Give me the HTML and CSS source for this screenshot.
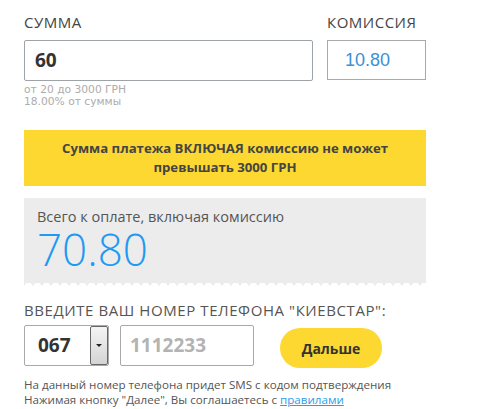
FILE: index.html
```html
<!DOCTYPE html>
<html lang="ru">
<head>
<meta charset="utf-8">
<link rel="stylesheet" href="styles.css">
</head>
<body>
<div class="page">
  <div class="amount-row">
    <div class="col-sum">
      <div class="label">СУММА</div>
      <div class="sum-input">60</div>
      <div class="hint">от 20 до 3000 ГРН</div>
      <div class="hint">18.00% от суммы</div>
    </div>
    <div class="col-fee">
      <div class="label">КОМИССИЯ</div>
      <div class="fee-input">10.80</div>
    </div>
  </div>

  <div class="warning">Сумма платежа ВКЛЮЧАЯ комиссию не может<br>превышать 3000 ГРН</div>

  <div class="total">
    <div class="total-label">Всего к оплате, включая комиссию</div>
    <div class="total-value">70.80</div>
  </div>

  <div class="phone-label">ВВЕДИТЕ ВАШ НОМЕР ТЕЛЕФОНА "КИЕВСТАР":</div>
  <div class="phone-row">
    <div class="select">
      <span class="select-value">067</span>
      <span class="select-btn"><span class="arrow"></span></span>
    </div>
    <div class="phone-input">1112233</div>
    <button class="next">Дальше</button>
  </div>
  <div class="note">На данный номер телефона придет SMS с кодом подтверждения</div>
  <div class="note">Нажимая кнопку "Далее", Вы соглашаетесь с <a href="#" class="rules">правилами</a></div>
</div>
</body>
</html>
```

FILE: styles.css
```css
* { box-sizing: border-box; }
html, body { margin: 0; padding: 0; background: #fff; }
body { font-family: "Open Sans", "Noto Sans", sans-serif; color: #444; }

.page { width: 478px; padding: 12px 0 0 24px; }

.amount-row { display: flex; gap: 14px; }
.col-sum { width: 289px; }
.col-fee { width: 99px; }

.label {
  font-size: 15px;
  line-height: 20px;
  color: #444;
  margin-bottom: 8px;
  letter-spacing: 0.5px;
}

.sum-input {
  height: 41px;
  border: 1px solid #9ea3a8;
  border-radius: 2px;
  padding: 0 10px;
  font-size: 19px;
  font-weight: 700;
  line-height: 39px;
  color: #333;
}

.fee-input {
  height: 40px;
  border: 1px solid #a9a9a9;
  padding: 0 17px;
  font-family: "Liberation Sans", Arial, sans-serif;
  font-size: 18px;
  line-height: 38px;
  color: #3d8fd6;
}

.hint {
  font-family: "DejaVu Sans", "Open Sans", sans-serif;
  font-size: 10.7px;
  line-height: 12px;
  color: #acacac;
}
.sum-input + .hint { margin-top: 3px; }

.warning {
  margin-top: 22px;
  width: 402px;
  height: 56px;
  background: #fcd831;
  padding: 9px 10px;
  font-size: 13.2px;
  font-weight: 700;
  line-height: 19px;
  color: #444;
  text-align: center;
}

.total {
  margin-top: 12px;
  width: 402px;
  height: 88px;
  background: #ececec;
  padding: 9px 13px 0;
  position: relative;
}
.total::after {
  content: "";
  position: absolute;
  left: 0;
  right: 0;
  bottom: 0;
  height: 5px;
  background: radial-gradient(circle at 4.5px 6px, #fff 4px, transparent 4.5px) 0 0 / 9px 5px repeat-x;
}
.total-label {
  font-size: 14.5px;
  line-height: 20px;
  color: #555;
}
.total-value {
  font-size: 44px;
  font-weight: 300;
  line-height: 44px;
  color: #1e9af2;
}

.phone-label {
  margin-top: 14px;
  font-size: 15px;
  line-height: 20px;
  color: #555;
  letter-spacing: 0.58px;
}

.phone-row {
  margin-top: 5px;
  display: flex;
  align-items: flex-start;
}

.select {
  width: 85px;
  height: 41px;
  border: 1px solid #a9a9a9;
  border-radius: 2px;
  display: flex;
}
.select-value {
  flex: 1;
  padding-left: 13px;
  font-size: 19px;
  font-weight: 700;
  line-height: 39px;
  color: #333;
}
.select-btn {
  width: 18px;
  border: 1px solid #666;
  border-radius: 2px;
  background: linear-gradient(#f4f4f4, #d4d4d4);
  display: flex;
  align-items: center;
  justify-content: center;
}
.arrow {
  width: 0;
  height: 0;
  border-left: 3px solid transparent;
  border-right: 3px solid transparent;
  border-top: 3px solid #222;
}

.phone-input {
  margin-left: 11px;
  width: 134px;
  height: 41px;
  border: 1px solid #a9a9a9;
  border-radius: 2px;
  padding-left: 9px;
  font-size: 19px;
  font-weight: 700;
  line-height: 39px;
  color: #b3b3b3;
}

.next {
  margin: 3px 0 0 26px;
  width: 102px;
  height: 40px;
  border: 0;
  border-radius: 20px;
  background: #fcd831;
  font-family: "Open Sans", "Noto Sans", sans-serif;
  font-size: 14px;
  font-weight: 700;
  color: #333;
  padding: 0;
}

.note {
  font-size: 11.6px;
  line-height: 15px;
  color: #555;
}
.phone-row + .note { margin-top: 9px; }
.rules { color: #2c9de6; text-decoration: underline; }
```
